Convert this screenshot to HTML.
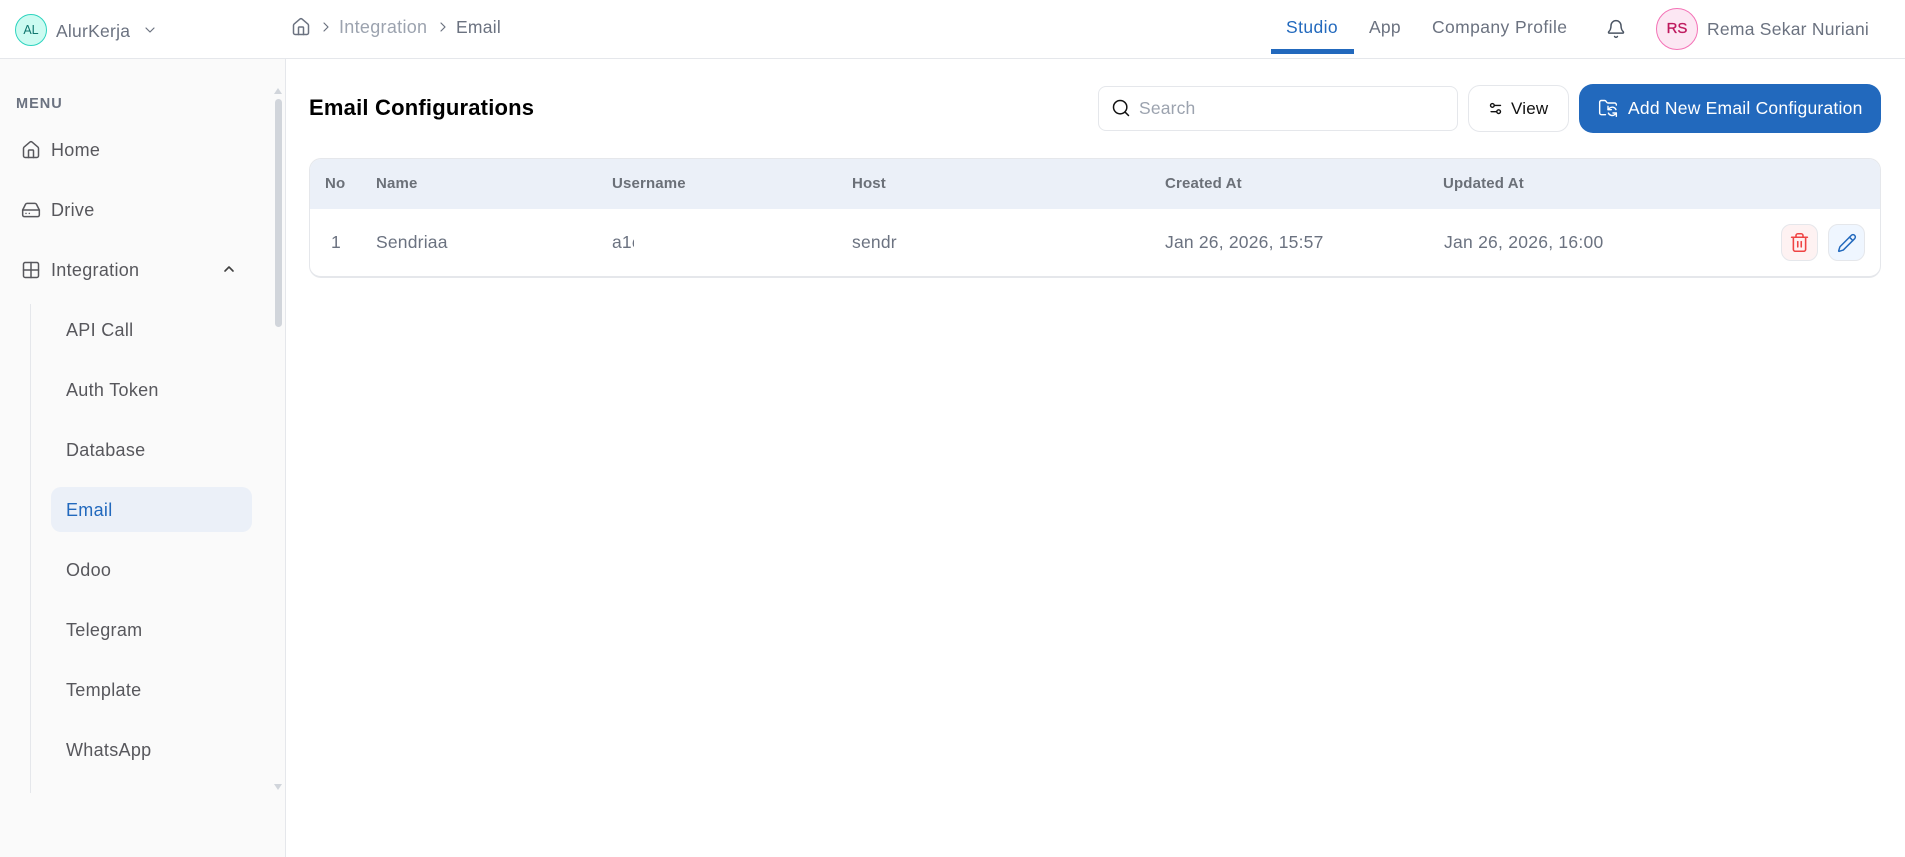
<!DOCTYPE html>
<html lang="en"><head><meta charset="utf-8"><title>Email Configurations</title>
<style>
*{box-sizing:border-box;margin:0;padding:0}
html,body{width:1905px;height:857px;overflow:hidden;background:#fff;font-family:"Liberation Sans",sans-serif}
.a{position:absolute}
.t{position:absolute;white-space:nowrap;line-height:20px;height:20px;margin-top:-10px}
.s{font-size:18px;letter-spacing:.3px;color:#57575c}
.h{font-size:15px;font-weight:700;color:#6b7078;letter-spacing:.15px}
.c{font-size:17.5px;color:#6b7280;letter-spacing:.2px}
.n{font-size:17.5px;letter-spacing:.25px;color:#6b7280}
svg{position:absolute;fill:none;stroke:currentColor;stroke-width:1.8;stroke-linecap:round;stroke-linejoin:round}
</style></head><body>
<!-- header -->
<div class="a" style="left:0;top:58px;width:1905px;height:1px;background:#e5e7eb"></div>
<div class="a" style="left:15px;top:14px;width:32px;height:32px;border-radius:50%;background:#ccfbf1;border:1px solid #2dd4bf"></div>
<div class="t" style="left:15px;width:32px;text-align:center;top:30px;font-size:12.5px;color:#0f766e">AL</div>
<div class="t n" style="left:56px;top:31px">AlurKerja</div>
<svg style="left:142px;top:22px;color:#6b7280" width="16" height="16" viewBox="0 0 24 24"><path d="m6 9 6 6 6-6"/></svg>
<svg style="left:291px;top:17px;color:#6b7280" width="20" height="20" viewBox="0 0 24 24"><path d="M15 21v-8a1 1 0 0 0-1-1h-4a1 1 0 0 0-1 1v8"/><path d="M3 10a2 2 0 0 1 .709-1.528l7-5.999a2 2 0 0 1 2.582 0l7 5.999A2 2 0 0 1 21 10v9a2 2 0 0 1-2 2H5a2 2 0 0 1-2-2z"/></svg>
<svg style="left:318px;top:19px;color:#6b7280" width="16" height="16" viewBox="0 0 24 24"><path d="m9 18 6-6-6-6"/></svg>
<div class="t" style="left:339px;top:27px;font-size:18px;letter-spacing:.3px;color:#9ca3af">Integration</div>
<svg style="left:435px;top:19px;color:#6b7280" width="16" height="16" viewBox="0 0 24 24"><path d="m9 18 6-6-6-6"/></svg>
<div class="t n" style="left:456px;top:27px">Email</div>
<div class="t n" style="left:1286px;top:27px;color:#2269bd;letter-spacing:.4px">Studio</div>
<div class="a" style="left:1271px;top:49px;width:83px;height:5px;background:#2269bd"></div>
<div class="t n" style="left:1369px;top:27px">App</div>
<div class="t n" style="left:1432px;top:27px;letter-spacing:.4px">Company Profile</div>
<svg style="left:1606px;top:19px;color:#4b5563" width="20" height="20" viewBox="0 0 24 24"><path d="M10.268 21a2 2 0 0 0 3.464 0"/><path d="M3.262 15.326A1 1 0 0 0 4 17h16a1 1 0 0 0 .74-1.673C19.41 13.956 18 12.499 18 8A6 6 0 0 0 6 8c0 4.499-1.411 5.956-2.738 7.326"/></svg>
<div class="a" style="left:1656px;top:8px;width:42px;height:42px;border-radius:50%;background:#fce7f3;border:1px solid #f472b6"></div>
<div class="t" style="left:1656px;width:42px;text-align:center;top:29px;font-size:15px;color:#be185d;-webkit-text-stroke:.3px #be185d">RS</div>
<div class="t n" style="left:1707px;top:29px">Rema Sekar Nuriani</div>
<!-- sidebar -->
<div class="a" style="left:0;top:59px;width:286px;height:798px;background:#fafafa;border-right:1px solid #e5e7eb"></div>
<div class="t" style="left:16px;top:104px;font-size:14.5px;font-weight:700;color:#6b7280;letter-spacing:1px">MENU</div>
<svg style="left:21px;top:140px;color:#57575c" width="20" height="20" viewBox="0 0 24 24"><path d="M15 21v-8a1 1 0 0 0-1-1h-4a1 1 0 0 0-1 1v8"/><path d="M3 10a2 2 0 0 1 .709-1.528l7-5.999a2 2 0 0 1 2.582 0l7 5.999A2 2 0 0 1 21 10v9a2 2 0 0 1-2 2H5a2 2 0 0 1-2-2z"/></svg>
<div class="t s" style="left:51px;top:150px">Home</div>
<svg style="left:21px;top:200px;color:#57575c" width="20" height="20" viewBox="0 0 24 24"><path d="M22 12H2"/><path d="M5.45 5.11 2 12v6a2 2 0 0 0 2 2h16a2 2 0 0 0 2-2v-6l-3.45-6.89A2 2 0 0 0 16.76 4H7.24a2 2 0 0 0-1.79 1.11z"/><path d="M6 16h.01"/><path d="M10 16h.01"/></svg>
<div class="t s" style="left:51px;top:210px">Drive</div>
<svg style="left:21px;top:260px;color:#57575c" width="20" height="20" viewBox="0 0 24 24"><rect x="3" y="3" width="18" height="18" rx="2"/><path d="M3 12h18"/><path d="M12 3v18"/></svg>
<div class="t s" style="left:51px;top:270px">Integration</div>
<svg style="left:221px;top:261px;color:#404040;stroke-width:2.4" width="16" height="16" viewBox="0 0 24 24"><path d="m18 15-6-6-6 6"/></svg>
<div class="a" style="left:30px;top:304px;width:1px;height:489px;background:#e5e7eb"></div>
<div class="t s" style="left:66px;top:330px">API Call</div>
<div class="t s" style="left:66px;top:390px">Auth Token</div>
<div class="t s" style="left:66px;top:450px">Database</div>
<div class="a" style="left:51px;top:487px;width:201px;height:45px;border-radius:10px;background:#ebf0f8"></div>
<div class="t s" style="left:66px;top:510px;color:#2269bd">Email</div>
<div class="t s" style="left:66px;top:570px">Odoo</div>
<div class="t s" style="left:66px;top:630px">Telegram</div>
<div class="t s" style="left:66px;top:690px">Template</div>
<div class="t s" style="left:66px;top:750px">WhatsApp</div>
<div class="a" style="left:275px;top:99px;width:7px;height:228px;border-radius:4px;background:#d1d5db"></div>
<div class="a" style="left:274px;top:88px;width:0;height:0;border-left:4.5px solid transparent;border-right:4.5px solid transparent;border-bottom:6px solid #d1d5db"></div>
<div class="a" style="left:274px;top:784px;width:0;height:0;border-left:4.5px solid transparent;border-right:4.5px solid transparent;border-top:6px solid #d1d5db"></div>
<!-- top bar -->
<div class="t" style="left:309px;top:108px;height:26px;line-height:26px;margin-top:-13px;font-size:22px;font-weight:700;color:#000;letter-spacing:.2px">Email Configurations</div>
<div class="a" style="left:1098px;top:86px;width:360px;height:45px;border:1px solid #e5e7eb;border-radius:8px;background:#fff"></div>
<svg style="left:1111px;top:98px;color:#111" width="20" height="20" viewBox="0 0 24 24"><circle cx="11" cy="11" r="8"/><path d="m21 21-4.3-4.3"/></svg>
<div class="t" style="left:1139px;top:108px;font-size:17.5px;letter-spacing:.15px;color:#9ca3af">Search</div>
<div class="a" style="left:1468px;top:85px;width:101px;height:47px;border:1px solid #e5e7eb;border-radius:12px;background:#fff"></div>
<svg style="left:1488px;top:101px;color:#111;stroke-width:2.2" width="15" height="15" viewBox="0 0 24 24"><path d="M20 7h-9"/><path d="M14 17H5"/><circle cx="17" cy="17" r="3"/><circle cx="7" cy="7" r="3"/></svg>
<div class="t" style="left:1511px;top:109px;font-size:17px;color:#111;letter-spacing:.2px">View</div>
<div class="a" style="left:1579px;top:84px;width:302px;height:49px;border-radius:14px;background:#2269bd"></div>
<svg style="left:1598px;top:98px;color:#fff;stroke-width:1.7" width="20" height="20" viewBox="0 0 24 24"><path d="M9 20H4a2 2 0 0 1-2-2V5a2 2 0 0 1 2-2h3.9a2 2 0 0 1 1.69.9l.81 1.2a2 2 0 0 0 1.67.9H20a2 2 0 0 1 2 2v.5"/><path d="M12 10v4h4"/><path d="m12 14 1.535-1.605a5 5 0 0 1 8 1.5"/><path d="M22 22v-4h-4"/><path d="m22 18-1.535 1.605a5 5 0 0 1-8-1.5"/></svg>
<div class="t" style="left:1628px;top:108px;font-size:17.5px;color:#fff;letter-spacing:.22px">Add New Email Configuration</div>
<!-- table -->
<div class="a" style="left:309px;top:158px;width:1572px;height:120px;border:1px solid #e5e7eb;border-bottom-width:2px;border-radius:12px;overflow:hidden;background:#fff">
<div style="height:50px;background:#ebf0f8"></div></div>
<div class="t h" style="left:325px;top:184px">No</div>
<div class="t h" style="left:376px;top:184px">Name</div>
<div class="t h" style="left:612px;top:184px">Username</div>
<div class="t h" style="left:852px;top:184px">Host</div>
<div class="t h" style="left:1165px;top:184px">Created At</div>
<div class="t h" style="left:1443px;top:184px">Updated At</div>
<div class="t c" style="left:331px;top:242px">1</div>
<div class="t c" style="left:376px;top:242px">Sendriaa</div>
<div class="t c" style="left:612px;top:242px;width:22px;overflow:hidden">a1c8d2</div>
<div class="t c" style="left:852px;top:242px">sendr</div>
<div class="t c" style="left:1165px;top:242px">Jan 26, 2026, 15:57</div>
<div class="t c" style="left:1444px;top:242px;letter-spacing:.25px">Jan 26, 2026, 16:00</div>
<div class="a" style="left:1781px;top:224px;width:37px;height:37px;border-radius:10px;background:#fef2f2;border:1px solid #e5e7eb"></div>
<svg style="left:1789px;top:232px;color:#ef4444" width="21" height="21" viewBox="0 0 24 24"><path d="M3 6h18"/><path d="M19 6v14c0 1-1 2-2 2H7c-1 0-2-1-2-2V6"/><path d="M8 6V4c0-1 1-2 2-2h4c1 0 2 1 2 2v2"/><path d="M10 11v6"/><path d="M14 11v6"/></svg>
<div class="a" style="left:1828px;top:224px;width:37px;height:37px;border-radius:10px;background:#eff6ff;border:1px solid #e5e7eb"></div>
<svg style="left:1837px;top:233px;color:#2269bd" width="20" height="20" viewBox="0 0 24 24"><path d="M21.174 6.812a1 1 0 0 0-3.986-3.987L3.842 16.174a2 2 0 0 0-.5.83l-1.321 4.352a.5.5 0 0 0 .623.622l4.353-1.32a2 2 0 0 0 .83-.497z"/><path d="m15 5 4 4"/></svg>
</body></html>
